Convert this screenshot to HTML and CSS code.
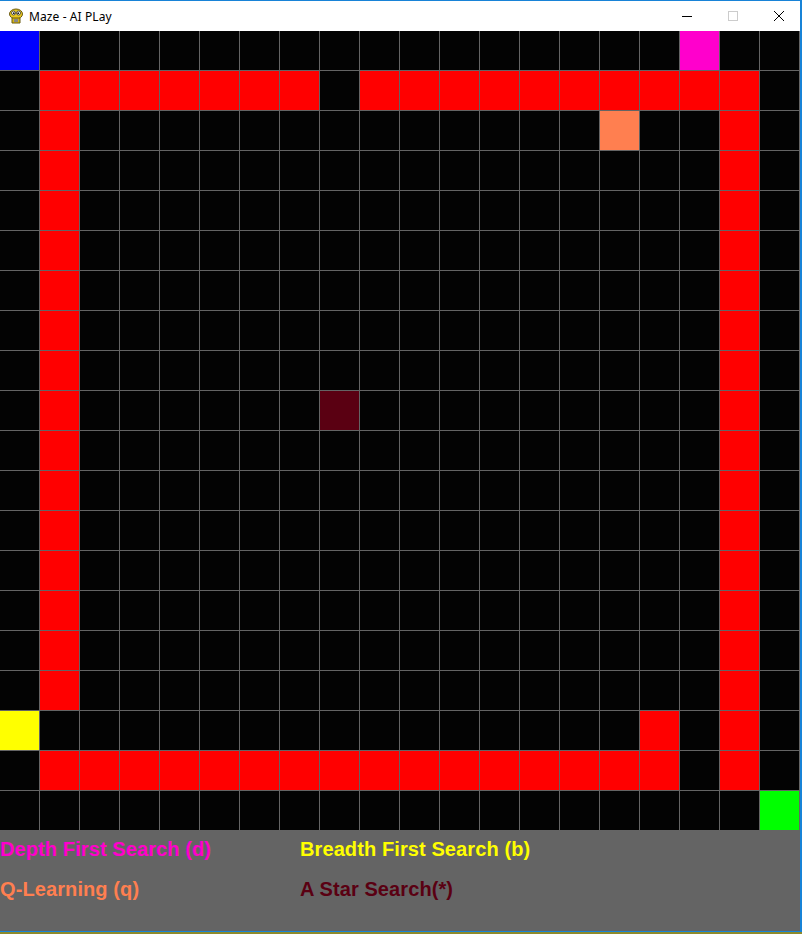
FILE: index.html
```html
<!DOCTYPE html>
<html>
<head>
<meta charset="utf-8">
<title>Maze - AI PLay</title>
<link rel="stylesheet" href="styles.css">
</head>
<body>
<div class="window">
  <div class="titlebar">
    <div class="title">
      <svg class="app-icon" width="16" height="16" viewBox="0 0 16 16">
        <ellipse cx="8" cy="6" rx="6.5" ry="5" fill="#e8c820" stroke="#6b5a10" stroke-width="1"/>
        <circle cx="5.5" cy="5" r="2" fill="#fff" stroke="#333" stroke-width="0.8"/>
        <circle cx="10.5" cy="5" r="2" fill="#fff" stroke="#333" stroke-width="0.8"/>
        <circle cx="5.8" cy="5.2" r="0.9" fill="#111"/>
        <circle cx="10.2" cy="5.2" r="0.9" fill="#111"/>
        <path d="M4 10 L4 15 L12 15 L12 10 Z" fill="#d8b818" stroke="#6b5a10" stroke-width="1"/>
        <rect x="6" y="11" width="4" height="3" fill="#888"/>
      </svg>
      <span class="title-text">Maze - AI PLay</span>
    </div>
    <div class="controls">
      <div class="ctl">
        <svg width="10" height="10" viewBox="0 0 10 10"><path d="M0 5.5 H10" stroke="#000" stroke-width="1"/></svg>
      </div>
      <div class="ctl">
        <svg width="10" height="10" viewBox="0 0 10 10"><rect x="0.5" y="0.5" width="9" height="9" fill="none" stroke="#cccccc" stroke-width="1"/></svg>
      </div>
      <div class="ctl">
        <svg width="10" height="10" viewBox="0 0 10 10"><path d="M0 0 L10 10 M10 0 L0 10" stroke="#000" stroke-width="1"/></svg>
      </div>
    </div>
  </div>
  <div class="maze">
    <div class="cell start"></div>
    <div class="cell goal-dfs"></div>
    <div class="cell wall top-a"></div>
    <div class="cell wall top-b"></div>
    <div class="cell wall left"></div>
    <div class="cell wall right"></div>
    <div class="cell wall bottom"></div>
    <div class="cell wall stub"></div>
    <div class="cell goal-q"></div>
    <div class="cell goal-astar"></div>
    <div class="cell goal-bfs"></div>
    <div class="cell end"></div>
    <div class="grid-lines"></div>
  </div>
  <div class="panel">
    <div class="label dfs">Depth First Search (d)</div>
    <div class="label bfs">Breadth First Search (b)</div>
    <div class="label ql">Q-Learning (q)</div>
    <div class="label astar">A Star Search(*)</div>
  </div>
</div>
</body>
</html>
```
FILE: styles.css
```css
html, body {
  margin: 0;
  padding: 0;
}
body {
  width: 802px;
  height: 934px;
  background: #8c8a2c;
  overflow: hidden;
}
.window {
  width: 800px;
  border-top: 1px solid #1883d7;
  border-right: 2px solid #1883d7;
  border-bottom: 1px solid #1883d7;
  background: #fff;
}
.titlebar {
  height: 30px;
  display: flex;
  justify-content: space-between;
  align-items: center;
  background: #fff;
}
.title {
  display: flex;
  align-items: center;
  padding-left: 8px;
  gap: 5px;
}
.app-icon {
  display: block;
}
.title-text {
  font-family: "Noto Sans", "Open Sans", sans-serif;
  font-size: 12px;
  color: #000;
  letter-spacing: 0.1px;
}
.controls {
  display: flex;
  height: 30px;
  margin-right: -2px;
}
.ctl {
  width: 46px;
  height: 30px;
  display: flex;
  align-items: center;
  justify-content: center;
}
.ctl svg {
  display: block;
}
.maze {
  position: relative;
  display: grid;
  grid-template-columns: repeat(20, 40px);
  grid-template-rows: repeat(20, 40px);
  width: 800px;
  height: 800px;
  background: #030303;
}
.grid-lines {
  position: absolute;
  inset: 0;
  pointer-events: none;
  background-image:
    linear-gradient(to right, transparent 39px, #646464 39px),
    linear-gradient(to bottom, transparent 39px, #646464 39px);
  background-size: 40px 40px;
}
.wall { background: #ff0000; }
.top-a { grid-row: 2; grid-column: 2 / 9; }
.top-b { grid-row: 2; grid-column: 10 / 20; }
.left { grid-row: 3 / 18; grid-column: 2; }
.right { grid-row: 3 / 20; grid-column: 19; }
.bottom { grid-row: 19; grid-column: 2 / 18; }
.stub { grid-row: 18; grid-column: 17; }
.start { grid-row: 1; grid-column: 1; background: #0000ff; }
.goal-dfs { grid-row: 1; grid-column: 18; background: #ff00cc; }
.goal-q { grid-row: 3; grid-column: 16; background: #ff7f50; }
.goal-astar { grid-row: 10; grid-column: 9; background: #5a0012; }
.goal-bfs { grid-row: 18; grid-column: 1; background: #ffff00; }
.end { grid-row: 20; grid-column: 20; background: #00ff00; }
.panel {
  height: 100px;
  box-sizing: border-box;
  padding-top: 7px;
  background: #646464;
  display: grid;
  grid-template-columns: 300px 1fr;
  grid-template-rows: 40px 40px;
  font-family: "Liberation Sans", Arial, sans-serif;
  font-weight: bold;
  font-size: 20px;
  line-height: 23px;
}
.label {
  white-space: nowrap;
  letter-spacing: 0.1px;
}
.dfs { color: #ff00cc; }
.bfs { color: #ffff00; }
.ql { color: #ff7f50; }
.astar { color: #5a0012; }
```
